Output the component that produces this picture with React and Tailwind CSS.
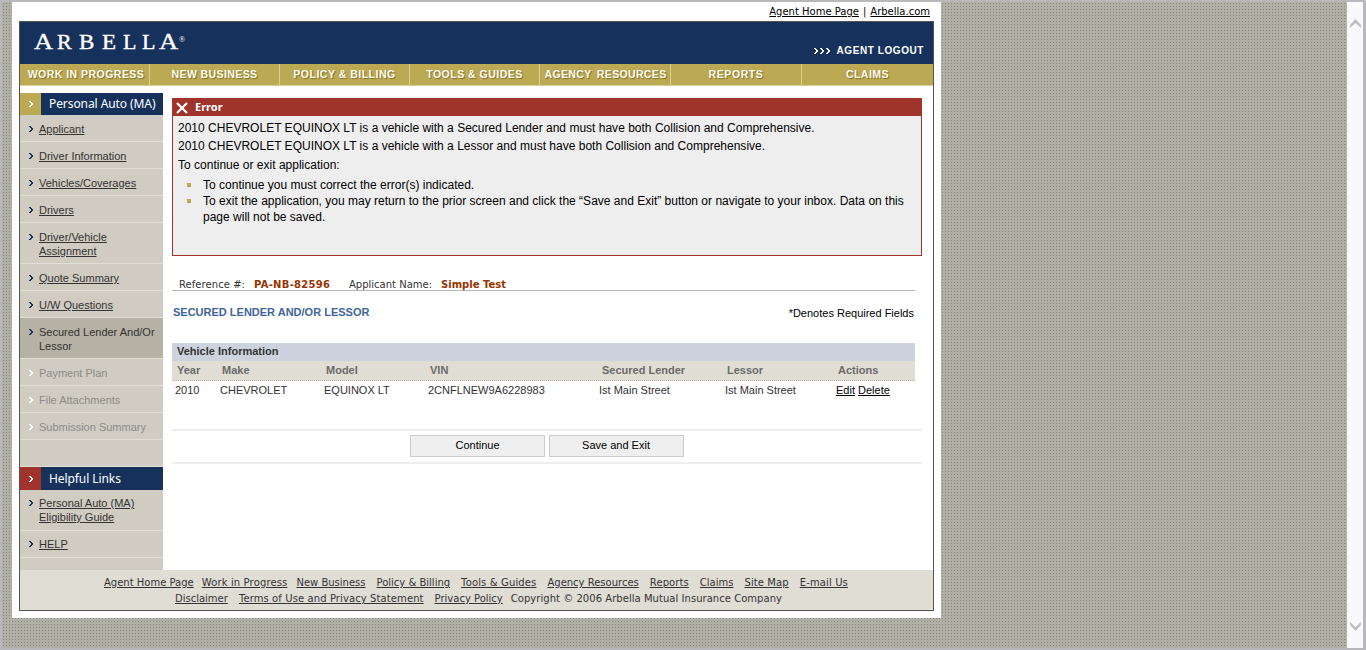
const clsArial = "font-['Liberation_Sans',Arial,sans-serif]";
const clsVerdana = "font-['DejaVu_Sans',Verdana,sans-serif]";

function Chevron({ className }) {
  return (
    <svg width="4" height="6" viewBox="0 0 4 6" shapeRendering="crispEdges" className={className} fill="currentColor">
      <path d="M0 0h2v1H0zM1 1h2v1H1zM2 2h2v2H2zM1 4h2v1H1zM0 5h2v1H0z" />
    </svg>
  );
}

const nav = [
  ['WORK IN PROGRESS', 'w-[130px] pl-[3px] tracking-[0.47px]'],
  ['NEW BUSINESS', 'w-[130px] tracking-[0.4px]'],
  ['POLICY & BILLING', 'w-[130px] tracking-[0.5px]'],
  ['TOOLS & GUIDES', 'w-[130px] tracking-[0.5px]'],
  ['AGENCY  RESOURCES', 'w-[131px] pl-px tracking-[0.35px] [word-spacing:-0.5px]'],
  ['REPORTS', 'w-[131px] tracking-[0.6px]'],
  ['CLAIMS', 'w-[131px] tracking-[0.5px]'],
];

const side = [
  ['Applicant', 'link'],
  ['Driver Information', 'link'],
  ['Vehicles/Coverages', 'link'],
  ['Drivers', 'link'],
  ['Driver/Vehicle\nAssignment', 'link'],
  ['Quote Summary', 'link'],
  ['U/W Questions', 'link'],
  ['Secured Lender And/Or\nLessor', 'current'],
  ['Payment Plan', 'off'],
  ['File Attachments', 'off'],
  ['Submission Summary', 'off'],
];

function SideItem({ text, kind, pad = 'pt-[7px] pb-[5px]' }) {
  const tone =
    kind === 'off' ? 'text-[#8b8b8b]' : kind === 'current' ? 'bg-[#b5b1a4] text-[#333]' : 'text-[#333]';
  return (
    <li className={`flex border-b border-[#e2dfd6] pl-[9px] ${pad} ${tone}`}>
      <Chevron className={`mt-[4px] mr-[6px] shrink-0 ${kind === 'off' ? 'text-white' : 'text-[#16325c]'}`} />
      <span className={`whitespace-pre text-[11px] leading-[14px] ${kind === 'link' ? 'underline underline-offset-1' : ''}`}>{text}</span>
    </li>
  );
}

function SideHead({ text, tone, size }) {
  return (
    <div className={`flex bg-[#16325c] ${size}`}>
      <span className={`flex w-[21px] items-center justify-center ${tone}`}>
        <Chevron className="text-white" />
      </span>
      <span className="flex items-center whitespace-nowrap pl-2 font-['Noto_Sans',Verdana,sans-serif] text-[12px] tracking-[-0.08px] text-white">{text}</span>
    </div>
  );
}

function FooterLink({ children, className }) {
  return <a className={`whitespace-nowrap underline underline-offset-1 ${className}`}>{children}</a>;
}

const cols = 'grid grid-cols-[45px_104px_104px_172px_125px_111px_auto] whitespace-nowrap';

export default function App() {
  return (
    <div className={`flex h-[650px] w-[1366px] overflow-hidden border-2 border-r-[3px] border-[#b8b8ba] bg-[#85857a] text-black ${clsArial}`}>
      <div className="flex-1 bg-[linear-gradient(to_right,#b1b0a7_2px,transparent_2px),linear-gradient(to_bottom,#b1b0a7_2px,transparent_2px)] bg-size-[3px_3px] bg-position-[2px_2px] pl-[10px]">
        <div className="flex h-[616px] w-[929px] flex-col bg-white pl-[7px]">
          <div className={`flex h-[19px] items-center justify-end pr-[11px] text-[10px] ${clsVerdana}`}>
            <FooterLink className="">Agent Home Page</FooterLink>
            <span className="mx-[4px]">|</span>
            <FooterLink className="">Arbella.com</FooterLink>
          </div>
          <div className="flex h-[590px] w-[915px] flex-col border border-[#55554d]">
            <header className="flex h-[42px] shrink-0 justify-between bg-[#16325c] text-white">
              <div className="flex items-baseline pl-[14px] pt-[4px] font-['Liberation_Serif','Times_New_Roman',serif] text-[20px] leading-[30px] [-webkit-text-stroke:0.35px_white]">
                <span className="w-[23px] origin-left scale-x-110 text-[24px]">A</span>
                <span className="w-[22px] origin-left scale-x-110">R</span>
                <span className="w-[23px] origin-left scale-x-115">B</span>
                <span className="w-[21px] origin-left scale-x-115">E</span>
                <span className="w-[19px] origin-left scale-x-110">L</span>
                <span className="w-[17px] origin-left scale-x-110">L</span>
                <span className="w-[20px] origin-left scale-x-110 text-[24px]">A</span>
                <span className="-translate-y-[7px] text-[8px] leading-none [-webkit-text-stroke:0]">®</span>
              </div>
              <div className="flex items-center pr-[9px] pt-[15px] text-[10px] font-bold tracking-[0.58px]">
                <Chevron className="mr-[2px]" />
                <Chevron className="mr-[2px]" />
                <Chevron className="mr-[6px]" />
                AGENT LOGOUT
              </div>
            </header>
            <nav className="flex h-[22px] shrink-0 border-b border-[#dccf9a] bg-[#bba953]">
              {nav.map(([label, c], i) => (
                <div key={label} className={`flex items-center justify-center whitespace-pre text-[10.5px] font-bold text-[#fffdf3] [text-shadow:1px_1px_1px_#80702c] ${i < 6 ? 'border-r border-[#dccf9a]' : ''} ${c}`}>
                  {label}
                </div>
              ))}
            </nav>

            <div className="flex h-[484px] pt-[7px]">
              <aside className="flex w-[143px] shrink-0 flex-col bg-[#d0ccc1]">
                <SideHead text="Personal Auto (MA)" tone="bg-[#bba953]" size="h-[22px]" />
                <ul>
                  {side.map(([t, k]) => <SideItem key={t} text={t} kind={k} />)}
                </ul>
                <div className="h-[27px] border-b border-[#e2dfd6]" />
                <SideHead text="Helpful Links" tone="bg-[#a0342c]" size="h-[23px]" />
                <ul>
                  <SideItem text={'Personal Auto (MA)\nEligibility Guide'} kind="link" pad="pt-[6px] pb-[6px]" />
                  <SideItem text="HELP" kind="link" pad="pt-[6px] pb-[6px]" />
                </ul>
              </aside>

              <main className="ml-[9px] w-[750px] pt-[5px]">
                <section className="h-[158px] border border-[#a0342c] bg-[#eee] text-[12px]">
                  <div className="flex h-[17px] items-center bg-[#a0342c] pl-[3px] text-white">
                    <svg width="12" height="12" viewBox="0 0 12 12" fill="none" stroke="#fff" strokeWidth="2.2" className="mr-[7px]">
                      <path d="M1 1 11 11M11 1 1 11" />
                    </svg>
                    <span className="font-['Noto_Sans',sans-serif] text-[11px] font-bold">Error</span>
                  </div>
                  <div className="pl-[5px] pt-[2px] tracking-[0.008px]">
                    <p className="h-[18px] leading-[20px]">2010 CHEVROLET EQUINOX LT is a vehicle with a Secured Lender and must have both Collision and Comprehensive.</p>
                    <p className="h-[19px] leading-[20px]">2010 CHEVROLET EQUINOX LT is a vehicle with a Lessor and must have both Collision and Comprehensive.</p>
                    <p className="h-[22px] leading-[20px]">To continue or exit application:</p>
                    <ul className="leading-[16px]">
                      <li className="flex"><span className="ml-[9px] mr-[12px] mt-[6px] size-1 shrink-0 bg-[#bba953]" />To continue you must correct the error(s) indicated.</li>
                      <li className="flex"><span className="ml-[9px] mr-[12px] mt-[6px] size-1 shrink-0 bg-[#bba953]" />
                        <span className="whitespace-nowrap">To exit the application, you may return to the prior screen and click the “Save and Exit” button or navigate to your inbox. Data on this<br />page will not be saved.</span>
                      </li>
                    </ul>
                  </div>
                </section>

                <div className={`mt-[20px] flex h-[15px] w-[743px] items-end whitespace-nowrap border-b border-[#b4b4b4] pl-[7px] text-[10px] leading-[11px] text-[#333] ${clsVerdana}`}>
                  <span className="w-[75px] tracking-[0.06px]">Reference #:</span>
                  <b className="w-[95px] tracking-[0.27px] text-[#993300]">PA-NB-82596</b>
                  <span className="w-[92px]">Applicant Name:</span>
                  <b className="text-[#993300]">Simple Test</b>
                </div>

                <div className="flex h-[52px] w-[742px] justify-between pl-px pt-[14px] text-[11px] leading-[14px]">
                  <b className="text-[#41659a]">SECURED LENDER AND/OR LESSOR</b>
                  <span className="pt-px">*Denotes Required Fields</span>
                </div>

                <div className="w-[743px] text-[11px] text-[#333]">
                  <div className="h-[18px] bg-[#cdd3de] pl-[5px] font-bold leading-[17px]">Vehicle Information</div>
                  <div className={`${cols} h-[20px] border-b border-dotted border-[#b5b5ae] bg-[#e0ddd5] pl-[5px] font-bold leading-[18px] text-[#6b6b6b]`}>
                    <span>Year</span><span>Make</span><span>Model</span><span>VIN</span><span>Secured Lender</span><span>Lessor</span><span>Actions</span>
                  </div>
                  <div className={`${cols} h-[48px] pl-[3px] leading-[18px]`}>
                    <span>2010</span><span>CHEVROLET</span><span>EQUINOX LT</span><span>2CNFLNEW9A6228983</span><span className="-ml-px">Ist Main Street</span><span>Ist Main Street</span>
                    <span className="text-black"><a className="underline underline-offset-1">Edit</a> <a className="underline underline-offset-1">Delete</a></span>
                  </div>
                </div>

                <div className="flex h-[35px] border-y-2 border-[#eee] pl-[238px] pt-[4px] text-[11px]">
                  <button className="mr-1 h-[22px] w-[135px] border border-[#ccc] bg-[#efefef] pb-[2px] leading-[18px]">Continue</button>
                  <button className="h-[22px] w-[135px] border border-[#ccc] bg-[#efefef] pr-px pb-[2px] leading-[18px]">Save and Exit</button>
                </div>
              </main>
            </div>

            <footer className={`flex-1 bg-[#e0ddd5] pt-[5px] text-[10px] leading-[16px] text-[#333] ${clsVerdana}`}>
              <div className="flex pl-[84px]">
                <FooterLink className="mr-2">Agent Home Page</FooterLink>
                <FooterLink className="mr-[9px] tracking-[0.14px]">Work in Progress</FooterLink>
                <FooterLink className="mr-[11px]">New Business</FooterLink>
                <FooterLink className="mr-[11px]">Policy &amp; Billing</FooterLink>
                <FooterLink className="mr-[11px] tracking-[0.14px]">Tools &amp; Guides</FooterLink>
                <FooterLink className="mr-[11px]">Agency Resources</FooterLink>
                <FooterLink className="mr-[11px] tracking-[0.1px]">Reports</FooterLink>
                <FooterLink className="mr-[11px]">Claims</FooterLink>
                <FooterLink className="mr-[11px] tracking-[0.1px]">Site Map</FooterLink>
                <FooterLink className="tracking-[0.12px]">E-mail Us</FooterLink>
              </div>
              <div className="flex pl-[155px]">
                <FooterLink className="mr-[11px]">Disclaimer</FooterLink>
                <FooterLink className="mr-[11px] tracking-[0.1px]">Terms of Use and Privacy Statement</FooterLink>
                <FooterLink className="mr-[8px]">Privacy Policy</FooterLink>
                <span className="whitespace-nowrap tracking-[0.04px]">Copyright © 2006 Arbella Mutual Insurance Company</span>
              </div>
            </footer>
          </div>
        </div>
      </div>
      <div className="flex w-4 flex-col items-center justify-between bg-[#f9f9f9] pb-[17px] pt-[17px]">
        <svg width="11" height="9" viewBox="0 0 11 9" fill="#bfbfbf"><path d="M0 6 5.5 0 11 6v3L5.5 4 0 9z" /></svg>
        <svg width="11" height="9" viewBox="0 0 11 9" fill="#bfbfbf"><path d="M0 3 5.5 9 11 3V0L5.5 5 0 0z" /></svg>
      </div>
    </div>
  );
}
